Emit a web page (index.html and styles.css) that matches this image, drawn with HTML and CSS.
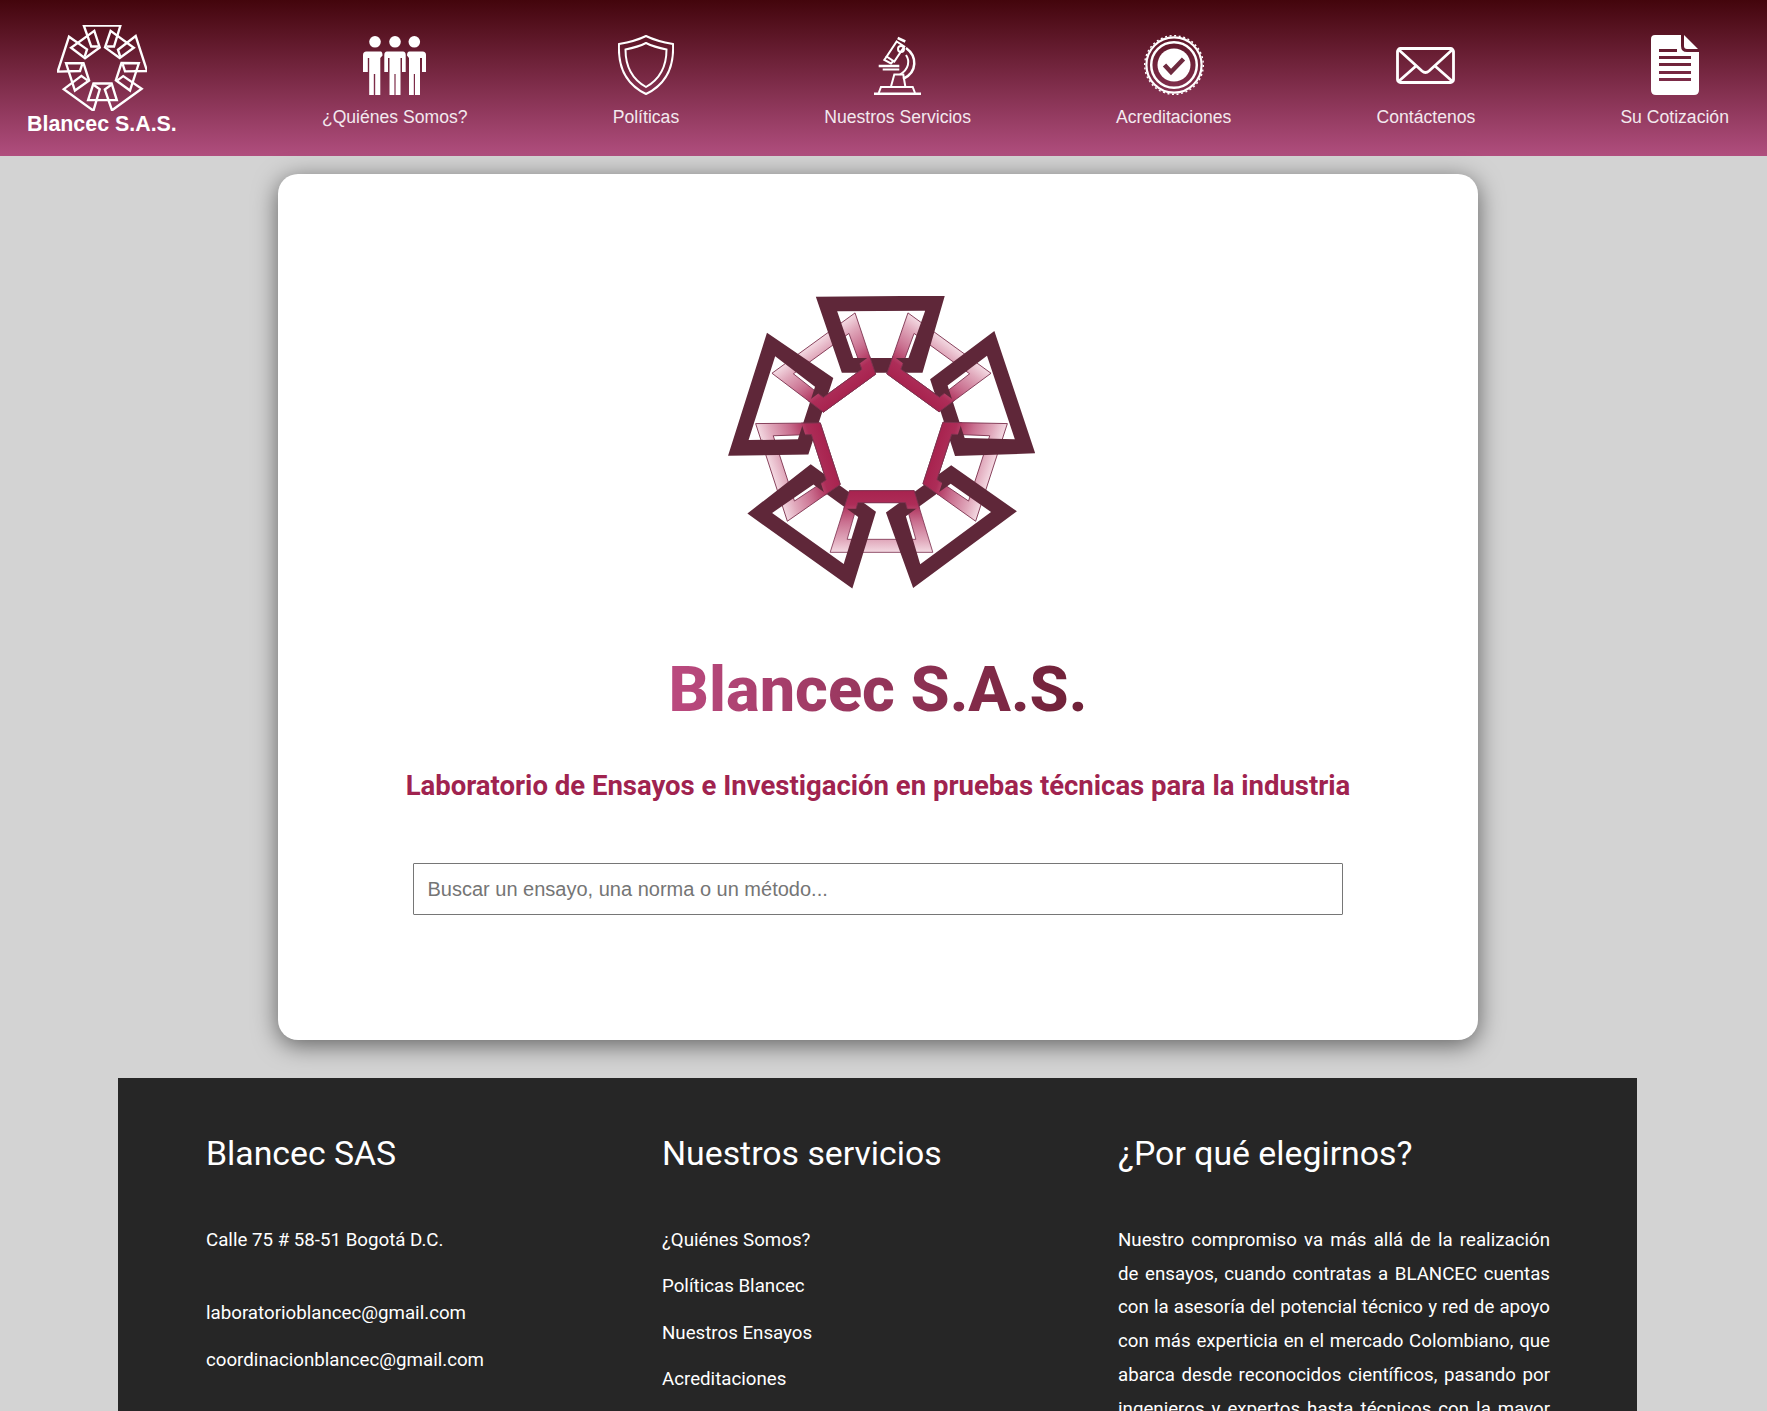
FILE: index.html
```html
<!DOCTYPE html>
<html lang="es">
<head>
<meta charset="utf-8">
<title>Blancec S.A.S.</title>
<link rel="stylesheet" href="styles.css">
</head>
<body>
<svg class="defs" width="0" height="0" aria-hidden="true">
  <defs>
    <linearGradient id="linkGrad" gradientUnits="userSpaceOnUse" x1="0" y1="633" x2="0" y2="816">
      <stop offset="0" stop-color="#a8234f"/>
      <stop offset="0.22" stop-color="#ad2d58"/>
      <stop offset="0.5" stop-color="#c96f8f"/>
      <stop offset="0.8" stop-color="#e0a8bb"/>
      <stop offset="1" stop-color="#f3d8e1"/>
    </linearGradient>
    <clipPath id="innerPart"><rect x="300" y="620" width="430" height="66"/></clipPath>
    <path id="lightLink" fill="url(#linkGrad)" fill-rule="evenodd" stroke="#7d3350" stroke-width="2.500" d="M419 632H613L669 817H361ZM444 668L412 778H618L587 668Z"/>
    <path id="darkLink" fill="#5f2739" fill-rule="evenodd" d="M318 50L705 47L638 278H396ZM382 94L430 234H596L646 92Z"/>
    <g id="markOutline" fill="none" stroke="#fff" stroke-width="24">
      <path d="M475 268H402L326 55H697L632 268H555"/>
      <path d="M424 642H608L660 810H370Z"/>
    </g>
  </defs>
</svg>
<header class="topbar">
  <a class="brand" href="#">
    <svg class="brand-mark" viewBox="58 50 905 870" aria-hidden="true">
      <use href="#markOutline"/>
      <use href="#markOutline" transform="rotate(72 515 470)"/>
      <use href="#markOutline" transform="rotate(144 515 470)"/>
      <use href="#markOutline" transform="rotate(216 515 470)"/>
      <use href="#markOutline" transform="rotate(288 515 470)"/>
    </svg>
    <span class="brand-name">Blancec S.A.S.</span>
  </a>
  <a class="nav-item" href="#">
    <span class="nav-icon">
      <svg width="63" height="59" viewBox="0 0 63 59" fill="#fff" aria-hidden="true">
        <circle cx="12" cy="5.800" r="5.800"/><circle cx="32" cy="5.800" r="5.800"/><circle cx="51.300" cy="5.800" r="5.800"/>
        <path d="M3.500 15.500H18Q19.500 16 19.500 19.500L17.300 22V59H12.200V38H10.800V59H6.200V22H4.800V36H0V19Q0 15.500 3.500 15.500Z"/>
        <path d="M24 15.500H40Q42.700 15.500 42.700 19V36H39V22H37.500V59H32.600V38H31.400V59H26.500V22H25V36H21.300V19Q21.300 15.500 24 15.500Z"/>
        <path d="M46 15.500H59.500Q63 15.500 63 19V36H59V22H57V59H52V38H50.800V59H46V22L44 19.500Q44 16 46 15.500Z"/>
      </svg>
    </span>
    <span class="nav-label">¿Quiénes Somos?</span>
  </a>
  <a class="nav-item" href="#">
    <span class="nav-icon">
      <svg width="56" height="60" viewBox="0 0 56 60" fill="none" stroke="#fff" stroke-width="2" aria-hidden="true">
        <path d="M28 1C20 5 10 7.500 1 9C0 28 5 48 28 59C51 48 56 28 55 9C46 7.500 36 5 28 1Z"/>
        <path d="M28 8C22 11 15 13 7.500 14.500C7.500 29 12 43 28 52C44 43 48.500 29 48.500 14.500C41 13 34 11 28 8Z"/>
      </svg>
    </span>
    <span class="nav-label">Políticas</span>
  </a>
  <a class="nav-item" href="#">
    <span class="nav-icon">
      <svg width="47" height="59" viewBox="0 0 47 59" fill="none" stroke="#fff" stroke-width="2" aria-hidden="true">
        <path stroke-width="2.500" d="M0 57.800H47"/>
        <path d="M4.700 57L7 51H38.700L41 57"/>
        <path d="M17 50.500L20.300 38.500H29.300L31.300 50.500"/>
        <path stroke-width="2.500" d="M4.700 30H25.300"/>
        <path d="M8.700 33.500H25.300"/>
        <path stroke-width="2.500" d="M32 12C43 20 44 36 29 43"/>
        <path d="M32 19C36 25 35 33 26 38.500"/>
        <path d="M22.700 5.500L30.300 10.500L20.300 25.500L12.700 20.500Z"/>
        <path stroke-width="2.500" d="M23.700 2L31.300 5.500"/>
        <path d="M12.700 20.500L10.300 24L17 27.500L19.300 25"/>
        <circle cx="27" cy="13" r="3"/>
      </svg>
    </span>
    <span class="nav-label">Nuestros Servicios</span>
  </a>
  <a class="nav-item" href="#">
    <span class="nav-icon">
      <svg width="60" height="60" viewBox="0 0 60 60" fill="none" stroke="#fff" aria-hidden="true">
        <circle cx="30" cy="30" r="29.300" stroke-width="1.400" stroke-dasharray="2 2.600"/>
        <circle cx="30" cy="30" r="27.600" stroke-width="2.200"/>
        <circle cx="30" cy="30" r="22.800" stroke-width="2.500"/>
        <circle cx="30" cy="30" r="16.500" fill="#fff" stroke="none"/>
        <path d="M20.500 30L27 37L39.500 24" stroke="#6e2a3f" stroke-width="4.500"/>
      </svg>
    </span>
    <span class="nav-label">Acreditaciones</span>
  </a>
  <a class="nav-item" href="#">
    <span class="nav-icon">
      <svg width="59" height="37" viewBox="0 0 59 37" fill="none" stroke="#fff" stroke-width="2.800" aria-hidden="true">
        <rect x="1.500" y="1.500" width="56" height="34" rx="3"/>
        <path d="M3 3L26 24Q29.500 27 33 24L56 3"/>
        <path d="M3 34L20 19M56 34L39 19"/>
      </svg>
    </span>
    <span class="nav-label">Contáctenos</span>
  </a>
  <a class="nav-item" href="#">
    <span class="nav-icon">
      <svg width="48" height="60" viewBox="0 0 48 60" aria-hidden="true">
        <path fill="#fff" fill-rule="evenodd" d="M4 0H30V11Q30 17 36 17H48V55Q48 60 43 60H5Q0 60 0 55V4Q0 0 4 0ZM8 14V17H26V14ZM8 21V24H40V21ZM8 28V31H40V28ZM8 36V39H40V36ZM8 43V46H40V43Z"/>
        <path fill="#fff" d="M33 0L47 14H36Q33 14 33 11Z"/>
      </svg>
    </span>
    <span class="nav-label">Su Cotización</span>
  </a>
</header>
<main class="card">
  <svg class="hero-mark" viewBox="52 48 923 882" role="img" aria-label="Logotipo de Blancec">
    <use href="#lightLink"/>
    <use href="#lightLink" transform="rotate(72 515 470)"/>
    <use href="#lightLink" transform="rotate(144 515 470)"/>
    <use href="#lightLink" transform="rotate(216 515 470)"/>
    <use href="#lightLink" transform="rotate(288 515 470)"/>
    <use href="#darkLink"/>
    <use href="#darkLink" transform="rotate(72 515 470)"/>
    <use href="#darkLink" transform="rotate(144 515 470)"/>
    <use href="#darkLink" transform="rotate(216 515 470)"/>
    <use href="#darkLink" transform="rotate(288 515 470)"/>
    <g clip-path="url(#innerPart)"><use href="#lightLink"/></g>
    <g transform="rotate(72 515 470)"><g clip-path="url(#innerPart)"><use href="#lightLink"/></g></g>
    <g transform="rotate(144 515 470)"><g clip-path="url(#innerPart)"><use href="#lightLink"/></g></g>
    <g transform="rotate(216 515 470)"><g clip-path="url(#innerPart)"><use href="#lightLink"/></g></g>
    <g transform="rotate(288 515 470)"><g clip-path="url(#innerPart)"><use href="#lightLink"/></g></g>
  </svg>
  <h1 class="title">Blancec S.A.S.</h1>
  <h2 class="subtitle">Laboratorio de Ensayos e Investigación en pruebas técnicas para la industria</h2>
  <input class="search" type="text" placeholder="Buscar un ensayo, una norma o un método...">
</main>
<footer class="footer">
  <section class="col">
    <h3 class="col-title">Blancec SAS</h3>
    <p class="col-line col-address">Calle 75 # 58-51 Bogotá D.C.</p>
    <p class="col-line">laboratorioblancec@gmail.com</p>
    <p class="col-line">coordinacionblancec@gmail.com</p>
  </section>
  <section class="col">
    <h3 class="col-title">Nuestros servicios</h3>
    <p class="col-line">¿Quiénes Somos?</p>
    <p class="col-line">Políticas Blancec</p>
    <p class="col-line">Nuestros Ensayos</p>
    <p class="col-line">Acreditaciones</p>
  </section>
  <section class="col">
    <h3 class="col-title">¿Por qué elegirnos?</h3>
    <p class="col-text">Nuestro compromiso va más allá de la realización de ensayos, cuando contratas a BLANCEC cuentas con la asesoría del potencial técnico y red de apoyo con más experticia en el mercado Colombiano, que abarca desde reconocidos científicos, pasando por ingenieros y expertos hasta técnicos con la mayor</p>
  </section>
</footer>
</body>
</html>
```

FILE: styles.css
```css
* { box-sizing: border-box; }
html, body { margin: 0; height: 100vh; overflow: hidden; }
body { background: #d3d3d3; font-family: "Liberation Sans", Arial, sans-serif; }
a { color: inherit; text-decoration: none; }
.defs { position: absolute; }

.topbar {
  height: 156px;
  background: linear-gradient(180deg, #43050c 0%, #b04e7e 100%);
  display: flex;
  justify-content: space-between;
  padding: 0 38px 0 27px;
  color: #fff;
}
.brand { display: flex; flex-direction: column; align-items: center; padding-top: 25px; }
.brand-mark { width: 90px; height: 86px; display: block; }
.brand-name { font-weight: 700; font-size: 21.400px; line-height: 24px; margin-top: 1px; }
.nav-item { display: flex; flex-direction: column; align-items: center; padding-top: 34px; }
.nav-icon { height: 62px; display: flex; align-items: center; justify-content: center; }
.nav-icon svg { display: block; }
.nav-label { font-size: 17.600px; line-height: 22px; margin-top: 9.500px; color: #f3e9ee; }

.card {
  width: 1200px;
  height: 866px;
  margin: 18px 0 0 278px;
  background: #fff;
  border-radius: 20px;
  box-shadow: 0 5px 25px rgba(0, 0, 0, 0.55);
  display: flex;
  flex-direction: column;
  align-items: center;
  padding-top: 122px;
}
.hero-mark { width: 308px; height: 294px; display: block; margin-left: 6px; }
.title {
  margin: 62px 0 0;
  font-family: Roboto, sans-serif;
  font-weight: 800;
  font-size: 63px;
  line-height: 75px;
  background: linear-gradient(90deg, #bb4a7f 0%, #6e2036 100%);
  -webkit-background-clip: text;
  background-clip: text;
  color: transparent;
}
.subtitle {
  margin: 42px 0 0;
  font-family: Roboto, sans-serif;
  font-weight: 700;
  font-size: 27.500px;
  line-height: 33px;
  color: #a0234f;
}
.search {
  width: 930px;
  height: 52px;
  margin-top: 61px;
  padding: 0 13.500px;
  border: 1px solid #767676;
  border-radius: 1px;
  background: #fff;
  font-family: "Liberation Sans", Arial, sans-serif;
  font-size: 20px;
}
.search::placeholder { color: #757575; opacity: 1; }

.footer {
  width: 1519px;
  margin: 38px 0 0 118px;
  background: #262626;
  color: #fff;
  padding: 51px 87px 0 88px;
  display: grid;
  grid-template-columns: repeat(3, 432px);
  column-gap: 24px;
  font-family: Roboto, sans-serif;
}
.col-title { margin: 0 0 38px; font-weight: 400; font-size: 33.800px; line-height: 50px; }
.col-line { margin: 0; font-size: 18.720px; line-height: 46.300px; }
.col-address { margin-bottom: 27px; }
.col-text { margin: 0; font-size: 18.720px; line-height: 33.700px; text-align: justify; text-align-last: justify; padding-top: 7px; }
```
